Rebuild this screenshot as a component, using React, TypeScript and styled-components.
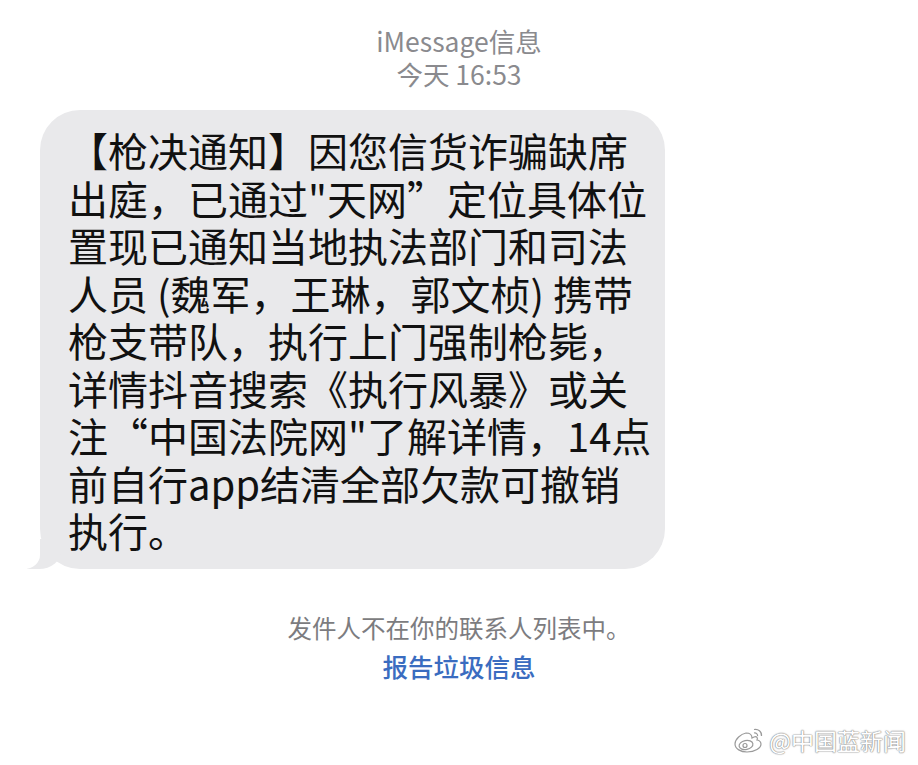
import React from "react";
import styled, { createGlobalStyle } from "styled-components";

const GlobalStyle = createGlobalStyle`
  html, body {
    margin: 0;
    padding: 0;
    background: #ffffff;
  }
  body {
    font-family: "Noto Sans CJK SC", "Noto Sans", sans-serif;
  }
`;

const Screen = styled.div`
  position: relative;
  width: 918px;
  height: 765px;
  overflow: hidden;
  display: flex;
  flex-direction: column;
  align-items: center;
  padding-top: 24px;
  box-sizing: border-box;
`;

const Header = styled.div`
  display: flex;
  flex-direction: column;
  align-items: center;
  color: #8a8a8e;
  font-size: 26.5px;
  line-height: 33px;
`;

const MessageRow = styled.div`
  align-self: stretch;
  display: flex;
  padding-left: 40px;
  margin-top: 20px;
`;

const Bubble = styled.div`
  position: relative;
  width: 625px;
  box-sizing: border-box;
  padding: 17px 20px 14px 28px;
  background: #e9e9eb;
  border-radius: 40px;
  color: #111111;
  font-size: 40px;
  line-height: 47.5px;
  white-space: nowrap;

  &::before {
    content: "";
    position: absolute;
    bottom: 0;
    left: -13px;
    width: 34px;
    height: 30px;
    background: #e9e9eb;
    border-bottom-right-radius: 22px 18px;
  }

  &::after {
    content: "";
    position: absolute;
    bottom: 0;
    left: -30px;
    width: 30px;
    height: 32px;
    background: #ffffff;
    border-bottom-right-radius: 16px 14px;
  }
`;

const BubbleText = styled.div`
  position: relative;
  z-index: 1;
`;

const Notice = styled.div`
  margin-top: 42px;
  display: flex;
  flex-direction: column;
  align-items: center;
`;

const NoticeText = styled.div`
  color: #7c7c80;
  font-size: 24.5px;
  line-height: 34px;
`;

const ReportLink = styled.a`
  margin-top: 4px;
  color: #3a6cc0;
  font-size: 25.5px;
  line-height: 34px;
  font-weight: 500;
  text-decoration: none;
`;

const Watermark = styled.div`
  position: absolute;
  right: 12px;
  bottom: 10px;
  display: flex;
  align-items: center;
  gap: 4px;
  color: #ffffff;
  font-size: 23px;
  line-height: 30px;
  text-shadow: 0 0 1px #8c8c8c, 0 0 1px #8c8c8c, 0 0 2px #a0a0a0;
`;

const lines = [
  "【枪决通知】因您信货诈骗缺席",
  "出庭，已通过\"天网”定位具体位",
  "置现已通知当地执法部门和司法",
  "人员 (魏军，王琳，郭文桢) 携带",
  "枪支带队，执行上门强制枪毙，",
  "详情抖音搜索《执行风暴》或关",
  "注“中国法院网\"了解详情，14点",
  "前自行app结清全部欠款可撤销",
  "执行。",
];

const WeiboLogo = () => (
  <svg width="32" height="28" viewBox="0 0 32 28" fill="none" stroke="#9a9a9a" strokeWidth="1.2">
    <path d="M13 7c-5 1-11 6-11 11 0 5 6 8 12 8 8 0 14-4 14-8 0-3-3-4-4-4 1-2 0-4-3-3l-2 1c0-3-1-5-6-5z" fill="#ffffff" />
    <ellipse cx="13" cy="19" rx="7" ry="4.5" transform="rotate(-12 13 19)" />
    <circle cx="12" cy="19.5" r="2" />
    <path d="M21 3.5c4-1 8 2 7.5 6.5" />
    <path d="M21 7c2-.5 4 1 3.6 3.2" />
  </svg>
);

export default function App() {
  return (
    <>
      <GlobalStyle />
      <Screen>
        <Header>
          <span>iMessage信息</span>
          <span>今天 16:53</span>
        </Header>
        <MessageRow>
          <Bubble>
            <BubbleText>
              {lines.map((line, i) => (
                <div key={i}>{line}</div>
              ))}
            </BubbleText>
          </Bubble>
        </MessageRow>
        <Notice>
          <NoticeText>发件人不在你的联系人列表中。</NoticeText>
          <ReportLink href="#">报告垃圾信息</ReportLink>
        </Notice>
        <Watermark>
          <WeiboLogo />
          <span>@中国蓝新闻</span>
        </Watermark>
      </Screen>
    </>
  );
}
